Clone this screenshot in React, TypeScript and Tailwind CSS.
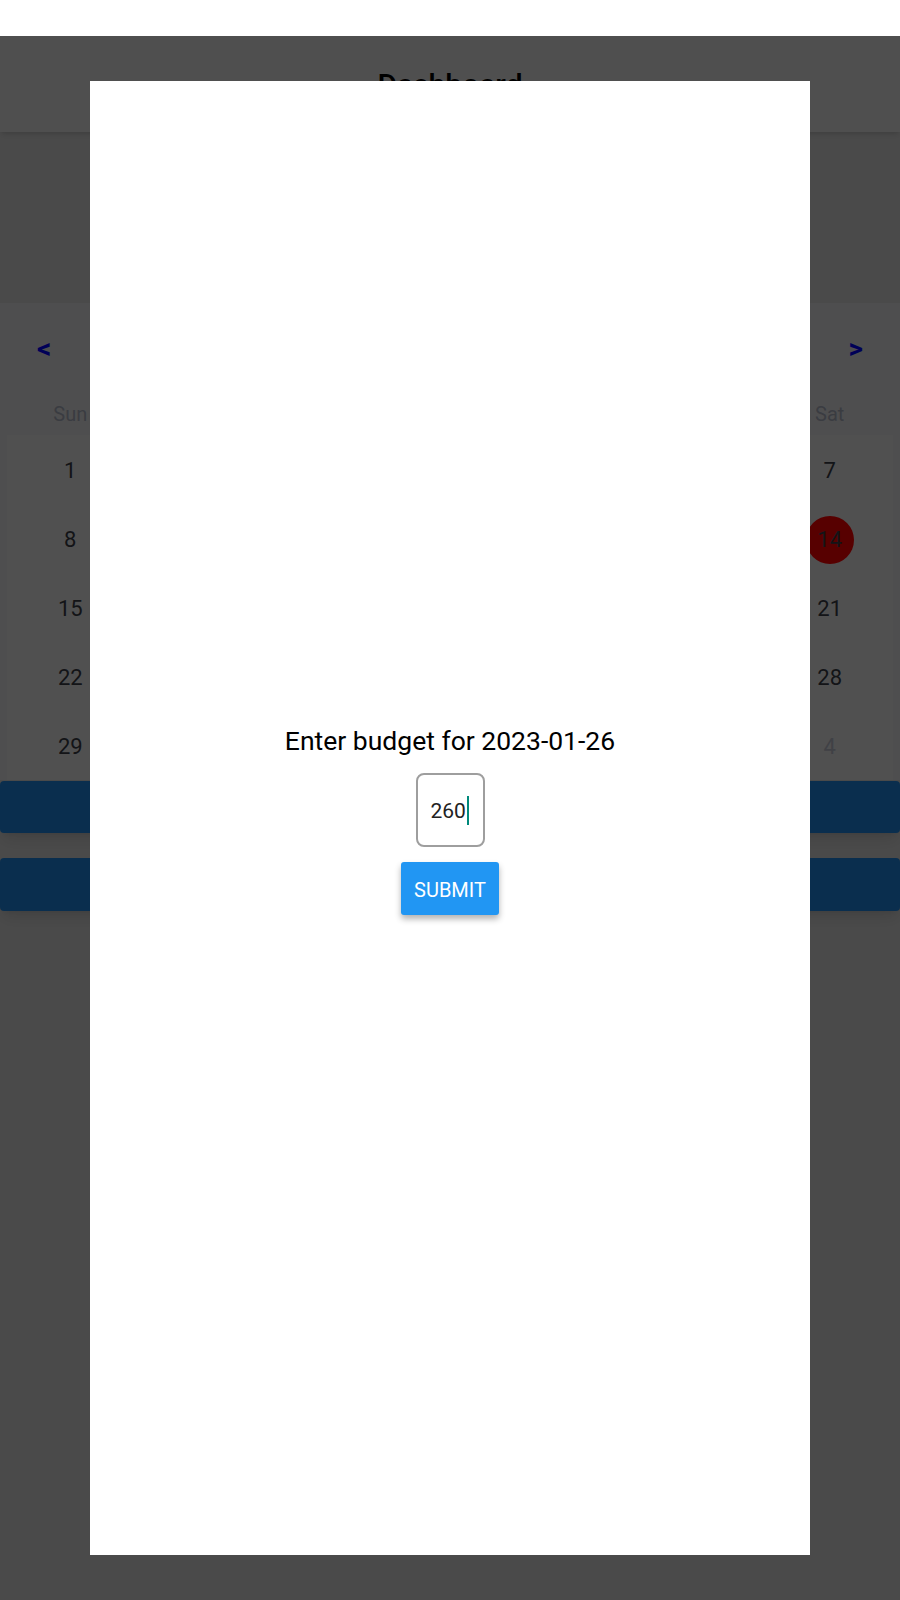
import React from "react";

const weekDays = ["Sun", "Mon", "Tue", "Wed", "Thu", "Fri", "Sat"];

// January 2023 starts on a Sunday, trailing days belong to February
const days: { day: number; current: boolean }[] = [
  ...Array.from({ length: 31 }, (_, i) => ({ day: i + 1, current: true })),
  ...Array.from({ length: 4 }, (_, i) => ({ day: i + 1, current: false })),
];

const App: React.FC = () => {
  return (
    <div className="min-h-screen bg-white font-['Roboto','Liberation_Sans',sans-serif]">
      {/* top strip */}
      <div className="h-9 bg-white" />

      <div className="relative h-[1564px] overflow-hidden bg-[#dadada]">
        {/* Header */}
        <header className="flex h-24 items-center justify-center bg-[#e8e8e8] shadow-md">
          <h1 className="text-[30px] font-medium text-black">Dashboard</h1>
        </header>

        {/* Calendar */}
        <section className="mt-[171px] bg-[#e5e5e7]">
          <div className="flex h-[90px] items-center justify-between px-[37px] pt-[2px]">
            <button className="text-[28px] font-bold text-[#0000ff]">&lt;</button>
            <button className="text-[28px] font-bold text-[#0000ff]">&gt;</button>
          </div>
          <div className="mx-[7px] grid h-[42px] grid-cols-7 items-center">
            {weekDays.map((d) => (
              <div key={d} className="text-center text-[20px] text-[#abb0bf]">
                {d}
              </div>
            ))}
          </div>
          <div className="mx-[7px] grid grid-cols-7 auto-rows-[69px] bg-[#e9e9eb]">
            {days.map((d, i) => (
              <div key={i} className="flex items-center justify-center pt-[2px]">
                {d.current && d.day === 14 ? (
                  <span className="flex h-12 w-12 items-center justify-center rounded-full bg-[#ff0000] text-[22px] text-[#3a3d45]">
                    {d.day}
                  </span>
                ) : (
                  <span
                    className={
                      d.current
                        ? "text-[22px] text-[#3a3d45]"
                        : "text-[22px] text-[#bcbfcb]"
                    }
                  >
                    {d.day}
                  </span>
                )}
              </div>
            ))}
          </div>
        </section>

        {/* Action buttons */}
        <div className="mt-px h-[52px] rounded bg-[#1e88e5] shadow-lg" />
        <div className="mt-[25px] h-[53px] rounded bg-[#1e88e5] shadow-lg" />

        {/* Modal */}
        <div className="absolute inset-0 flex bg-black/[0.66] px-[90px] py-[45px]">
          <div className="flex flex-1 flex-col items-center justify-center bg-white">
            <h2 className="text-[26.5px] text-black">Enter budget for 2023-01-26</h2>
            <div className="mt-[12px] flex h-[74px] w-[69px] items-center rounded-lg border-2 border-[#9e9e9e] pl-[13px]">
              <span className="pt-[4px] text-[21px] text-[#222222]">260</span>
              <span className="ml-px mt-[2px] h-[29px] w-[2px] bg-[#00897b]" />
            </div>
            <button className="mt-[15px] h-[53px] rounded-[3px] bg-[#2196f3] px-[13px] pt-[3px] text-[20px] text-white shadow-[0_4px_6px_rgba(0,0,0,0.3)]">
              SUBMIT
            </button>
          </div>
        </div>
      </div>
    </div>
  );
};

export default App;
